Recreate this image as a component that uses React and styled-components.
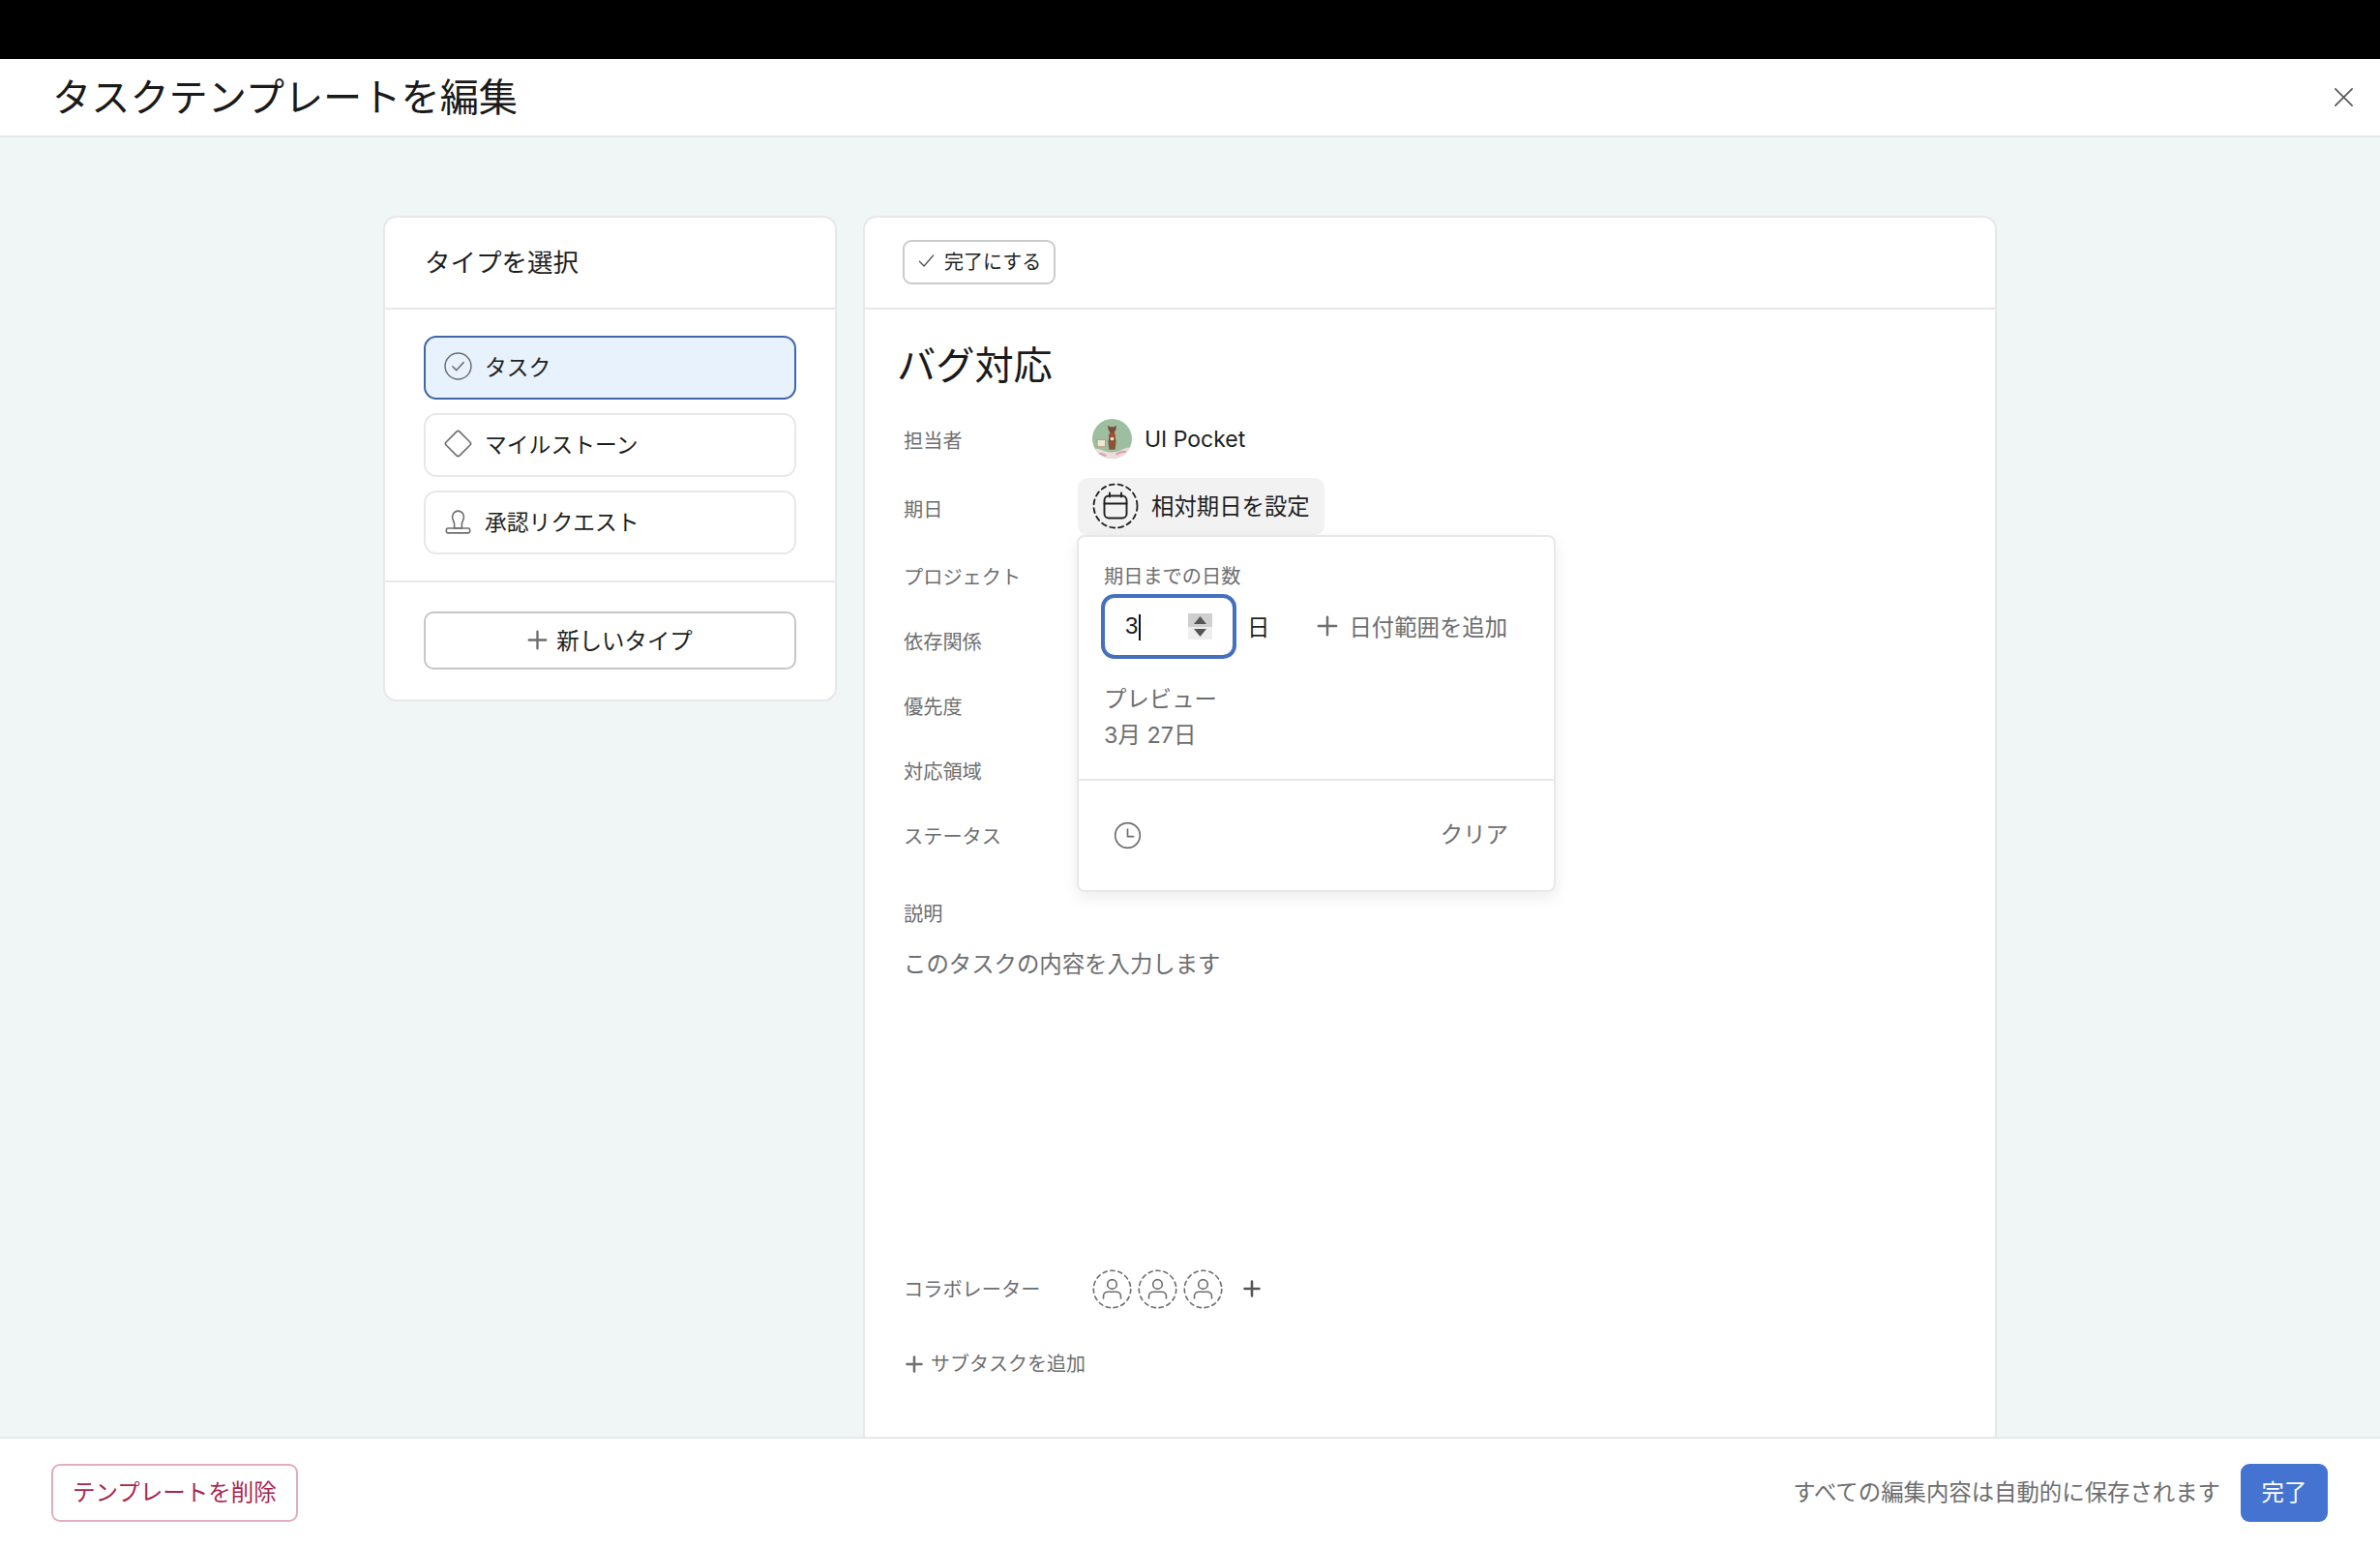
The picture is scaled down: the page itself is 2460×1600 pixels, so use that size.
import React from 'react';
import styled, { createGlobalStyle } from 'styled-components';

const GlobalStyle = createGlobalStyle`
  html, body {
    margin: 0;
    padding: 0;
    height: 100%;
    overflow: hidden;
    background: #fff;
    color: #1e1f21;
    font-family: "Inter", "Noto Sans CJK JP", sans-serif;
  }
  * { box-sizing: border-box; }
`;

const Page = styled.div`
  display: flex;
  flex-direction: column;
  height: 1600px;
`;

const BlackBar = styled.div`
  height: 61px;
  flex: none;
  background: #000;
`;

const Header = styled.header`
  display: flex;
  align-items: center;
  justify-content: space-between;
  height: 81px;
  flex: none;
  padding: 0 26px 0 54px;
  background: #fff;
  border-bottom: 2px solid #e6e8ea;
`;

const PageTitle = styled.h1`
  margin: 0;
  font-size: 40.2px;
  font-weight: 400;
  line-height: 50px;
  color: #1a1a1a;
`;

const Main = styled.main`
  flex: 1;
  min-height: 0;
  display: flex;
  align-items: stretch;
  gap: 27px;
  padding: 81px 0 0 396px;
  background: #f0f5f5;
  overflow: hidden;
`;

const Card = styled.section`
  background: #fff;
  border: 2px solid #e6e8ea;
  border-radius: 14px;
`;

const TypeCard = styled(Card)`
  width: 469px;
  height: 502px;
  flex: none;
`;

const CardHead = styled.div`
  display: flex;
  align-items: center;
  height: 95px;
  padding: 0 41px 4px;
  font-size: 26.5px;
  border-bottom: 2px solid #e6e8ea;
`;

const TypeList = styled.div`
  display: flex;
  flex-direction: column;
  gap: 14px;
  padding: 27px 40px;
  border-bottom: 2px solid #e6e8ea;
`;

const TypeItem = styled.div`
  display: flex;
  align-items: center;
  gap: 12px;
  height: 66px;
  padding: 0 17px 3px 18px;
  font-size: 22.8px;
  border-radius: 13px;
  border: 2px solid ${(p) => (p.$active ? '#3f66a8' : '#e6e8ea')};
  background: ${(p) => (p.$active ? '#e8f2fd' : '#fff')};
  svg { flex: none; color: #6d6e6f; }
`;

const NewTypeWrap = styled.div`
  padding: 30px 40px;
`;

const NewTypeButton = styled.button`
  display: flex;
  align-items: center;
  justify-content: center;
  gap: 9px;
  width: 100%;
  height: 60px;
  padding: 0 0 2px;
  font: inherit;
  font-size: 23.4px;
  color: #1e1f21;
  background: #fff;
  border: 2px solid #c4c6c8;
  border-radius: 10px;
  svg { color: #6d6e6f; }
`;

const EditCard = styled(Card)`
  width: 1172px;
  flex: none;
  height: 1300px;
`;

const EditHead = styled.div`
  display: flex;
  align-items: center;
  height: 95px;
  padding: 0 39px 2px;
  border-bottom: 2px solid #e6e8ea;
`;

const CompleteButton = styled.button`
  display: flex;
  align-items: center;
  gap: 9px;
  height: 46px;
  padding: 0 13px 2px;
  font: inherit;
  font-size: 20px;
  color: #1e1f21;
  background: #fff;
  border: 2px solid #c9cbcd;
  border-radius: 9px;
  svg { color: #555; }
`;

const EditBody = styled.div`
  padding: 33px 40px 0;
`;

const TaskTitle = styled.h2`
  margin: 0 0 18px -7px;
  font-size: 40.2px;
  font-weight: 400;
  line-height: 50px;
  color: #1a1a1a;
`;

const FieldRow = styled.div`
  position: relative;
  display: flex;
  align-items: center;
  height: ${(p) => p.$h || 67}px;
`;

const FieldLabel = styled.div`
  width: 195px;
  flex: none;
  font-size: 20.2px;
  line-height: 28px;
  color: #6d6e6f;
`;

const Avatar = styled.svg`
  width: 41px;
  height: 41px;
  border-radius: 50%;
  flex: none;
  margin-top: -6px;
`;

const AssigneeName = styled.span`
  margin: -5px 0 0 13px;
  font-size: 23px;
  line-height: 30px;
`;

const DueChip = styled.div`
  display: flex;
  align-items: center;
  gap: 13px;
  height: 59px;
  margin: -8px 0 0 -15px;
  padding: 0 15px;
  font-size: 23.4px;
  background: #f2f2f2;
  border-radius: 10px;
  span { margin-top: -3px; }
`;

const Popover = styled.div`
  position: absolute;
  z-index: 2;
  top: 62px;
  left: 179px;
  width: 495px;
  height: 369px;
  background: #fff;
  border: 2px solid #e6e8ea;
  border-radius: 8px;
  box-shadow: 0 6px 16px rgba(30, 31, 33, 0.08);
  display: flex;
  flex-direction: column;
`;

const PopoverTop = styled.div`
  height: 252px;
  flex: none;
  padding: 27px 26px 0 26px;
  border-bottom: 2px solid #e6e8ea;
`;

const PopoverLabel = styled.div`
  font-size: 20.2px;
  line-height: 28px;
  color: #6d6e6f;
`;

const DaysRow = styled.div`
  display: flex;
  align-items: center;
  margin: 4px 0 0 -3px;
`;

const DaysInput = styled.div`
  display: flex;
  align-items: center;
  justify-content: space-between;
  width: 140px;
  height: 67px;
  padding: 0 21px;
  font-family: "Liberation Sans", sans-serif;
  font-size: 24px;
  border: 4px solid #4470bd;
  border-radius: 14px;
`;

const Caret = styled.i`
  display: inline-block;
  width: 2px;
  height: 27px;
  margin-left: 1px;
  vertical-align: middle;
  background: #111;
`;

const Spinner = styled.div`
  display: flex;
  flex-direction: column;
  width: 25px;
  height: 27px;
`;

const SpinStep = styled.div`
  flex: 1;
  display: flex;
  align-items: center;
  justify-content: center;
  background: ${(p) => (p.$up ? '#cfcfcf' : '#eeeeee')};
  color: #555;
`;

const DayUnit = styled.span`
  margin: -2px 0 0 11px;
  font-size: 23.4px;
`;

const AddRange = styled.div`
  display: flex;
  align-items: center;
  gap: 11px;
  margin: -2px 0 0 49px;
  font-size: 23.4px;
  color: #6d6e6f;
`;

const Preview = styled.div`
  margin: 23px 0 0 0;
  font-size: 23.4px;
  line-height: 37px;
  color: #6d6e6f;
`;

const PopoverFoot = styled.div`
  display: flex;
  align-items: center;
  justify-content: space-between;
  height: 112px;
  padding: 0 47px 0 36px;
  font-size: 23.4px;
  color: #6d6e6f;
  span { margin-top: -4px; }
`;

const DescLabel = styled(FieldLabel)`
  margin-top: 33px;
`;

const DescText = styled.div`
  height: 331px;
  margin: 22px 0 0;
  font-size: 23.4px;
  line-height: 32px;
  color: #6d6e6f;
`;

const Collab = styled.div`
  display: flex;
  align-items: center;
  gap: 6px;
  margin-top: -2px;
`;

const AddPlus = styled.span`
  display: flex;
  margin-left: 15px;
  color: #555;
`;

const AddSubtask = styled.div`
  display: flex;
  align-items: center;
  gap: 8px;
  margin: 42px 0 0 2px;
  font-size: 20px;
  line-height: 28px;
  color: #6d6e6f;
`;

const Footer = styled.footer`
  position: relative;
  z-index: 3;
  display: flex;
  align-items: center;
  justify-content: space-between;
  flex: none;
  height: 115px;
  padding: 0 54px 2px 53px;
  background: #fff;
  border-top: 2px solid #e6e8ea;
`;

const DeleteButton = styled.button`
  height: 60px;
  padding: 0 20px 3px;
  font: inherit;
  font-size: 23.5px;
  color: #a8294f;
  background: #fff;
  border: 2px solid #e0aebd;
  border-radius: 9px;
`;

const FooterRight = styled.div`
  display: flex;
  align-items: center;
  gap: 21px;
`;

const SaveNote = styled.span`
  margin-top: -3px;
  font-size: 23.4px;
  color: #6d6e6f;
`;

const DoneButton = styled.button`
  width: 90px;
  height: 60px;
  padding: 0 0 4px;
  font: inherit;
  font-size: 23.4px;
  color: #fff;
  background: #4573d2;
  border: none;
  border-radius: 9px;
`;

const IconButton = styled.button`
  display: flex;
  padding: 0;
  background: none;
  border: none;
  color: #555;
`;

function Line({ size = 24, sw = 1.6, children }) {
  return (
    <svg width={size} height={size} viewBox="0 0 24 24" fill="none" stroke="currentColor" strokeWidth={sw} strokeLinecap="round" strokeLinejoin="round">
      {children}
    </svg>
  );
}

const PlusIcon = ({ size = 20, sw = 2.6 }) => (
  <Line size={size} sw={sw}><path d="M12 2v20M2 12h20" /></Line>
);

const CheckCircle = () => (
  <Line size={31} sw={1.15}>
    <circle cx="12" cy="12" r="10.4" />
    <path d="M7.6 12.2l3 3 5.8-6.2" />
  </Line>
);

const Diamond = () => (
  <Line size={31} sw={1.25}>
    <path d="M10.8 2.4a1.7 1.7 0 0 1 2.4 0l8.4 8.4a1.7 1.7 0 0 1 0 2.4l-8.4 8.4a1.7 1.7 0 0 1-2.4 0l-8.4-8.4a1.7 1.7 0 0 1 0-2.4z" />
  </Line>
);

const Stamp = () => (
  <Line size={31} sw={1.25}>
    <path d="M9 14.6c0-2-1.6-3.2-1.6-6a4.6 4.6 0 0 1 9.2 0c0 2.8-1.6 4-1.6 6v3.2H9z" />
    <rect x="2.6" y="17.8" width="18.8" height="3.8" rx="1.2" />
  </Line>
);

const DashedCircle = ({ size, color, dash, sw, children }) => (
  <svg width={size} height={size} viewBox="0 0 48 48" fill="none" stroke={color} strokeLinecap="round" strokeLinejoin="round">
    <circle cx="24" cy="24" r="22.5" strokeWidth={sw} strokeDasharray={dash} />
    {children}
  </svg>
);

function AvatarArt() {
  return (
    <Avatar viewBox="0 0 40 40">
      <rect width="40" height="40" fill="#9dbf9f" />
      <path d="M0 31c6-3 10 1 14 2s10 1 14-1 8-4 12-3v11H0z" fill="#ecdcdc" />
      <path d="M3 36c4-2 8 0 11 1M24 36c3-2 6-3 10-3" stroke="#d8a2a8" strokeWidth="2" fill="none" />
      <rect x="5" y="21" width="8" height="7" fill="#efe6d4" stroke="#b5846c" strokeWidth="0.6" />
      <path d="M15.5 6.5l2.5 1.5h4l2.5-1.5-.8 4.500-2 3.500h-3.400l-2-3.500z" fill="#7a4a36" />
      <path d="M17.5 14h5l1.500 9-1 8h-6l-1-8z" fill="#8a5238" />
      <rect x="16.500" y="16" width="7" height="1.800" fill="#c8394a" />
      <circle cx="20" cy="20" r="1.800" fill="#f1e5c8" />
    </Avatar>
  );
}

const Person = () => (
  <g strokeWidth="1.9">
    <circle cx="24" cy="18" r="5.6" />
    <path d="M13.5 35v-2.6c0-3.2 2.6-5.2 5.6-5.2h9.8c3 0 5.6 2 5.6 5.2V35" />
  </g>
);

export default function App() {
  return (
    <Page>
      <GlobalStyle />
      <BlackBar />
      <Header>
        <PageTitle>タスクテンプレートを編集</PageTitle>
        <IconButton aria-label="閉じる">
          <Line size={23} sw={1.7}><path d="M3 3l18 18M21 3L3 21" /></Line>
        </IconButton>
      </Header>
      <Main>
        <TypeCard>
          <CardHead>タイプを選択</CardHead>
          <TypeList>
            <TypeItem $active><CheckCircle />タスク</TypeItem>
            <TypeItem><Diamond />マイルストーン</TypeItem>
            <TypeItem><Stamp />承認リクエスト</TypeItem>
          </TypeList>
          <NewTypeWrap>
            <NewTypeButton><PlusIcon size={21} sw={2.7} />新しいタイプ</NewTypeButton>
          </NewTypeWrap>
        </TypeCard>
        <EditCard>
          <EditHead>
            <CompleteButton>
              <Line size={19} sw={1.7}><path d="M3 13l6 6L21 5" /></Line>
              完了にする
            </CompleteButton>
          </EditHead>
          <EditBody>
            <TaskTitle>バグ対応</TaskTitle>
            <FieldRow $h={70}>
              <FieldLabel>担当者</FieldLabel>
              <AvatarArt />
              <AssigneeName>UI Pocket</AssigneeName>
            </FieldRow>
            <FieldRow $h={72}>
              <FieldLabel>期日</FieldLabel>
              <DueChip>
                <DashedCircle size={48} color="#1e1f21" dash="5 4" sw="1.8">
                  <g strokeWidth="1.9">
                    <rect x="12.5" y="13.5" width="23" height="23" rx="4.5" />
                    <path d="M12.5 21.5h23M18 10.5v4M30 10.5v4" />
                  </g>
                </DashedCircle>
                <span>相対期日を設定</span>
              </DueChip>
              <Popover>
                <PopoverTop>
                  <PopoverLabel>期日までの日数</PopoverLabel>
                  <DaysRow>
                    <DaysInput>
                      <span>3<Caret /></span>
                      <Spinner>
                        <SpinStep $up>
                          <svg width="13" height="8" viewBox="0 0 13 8"><path d="M6.5 0L13 8H0z" fill="currentColor" /></svg>
                        </SpinStep>
                        <SpinStep>
                          <svg width="13" height="8" viewBox="0 0 13 8"><path d="M6.5 8L0 0h13z" fill="currentColor" /></svg>
                        </SpinStep>
                      </Spinner>
                    </DaysInput>
                    <DayUnit>日</DayUnit>
                    <AddRange><PlusIcon size={22} sw={2.7} />日付範囲を追加</AddRange>
                  </DaysRow>
                  <Preview>プレビュー<br />3月 27日</Preview>
                </PopoverTop>
                <PopoverFoot>
                  <Line size={29} sw={1.4}>
                    <circle cx="12" cy="12" r="10.6" />
                    <path d="M12 6.6V13h5" />
                  </Line>
                  <span>クリア</span>
                </PopoverFoot>
              </Popover>
            </FieldRow>
            <FieldRow><FieldLabel>プロジェクト</FieldLabel></FieldRow>
            <FieldRow><FieldLabel>依存関係</FieldLabel></FieldRow>
            <FieldRow><FieldLabel>優先度</FieldLabel></FieldRow>
            <FieldRow><FieldLabel>対応領域</FieldLabel></FieldRow>
            <FieldRow><FieldLabel>ステータス</FieldLabel></FieldRow>
            <DescLabel>説明</DescLabel>
            <DescText>このタスクの内容を入力します</DescText>
            <FieldRow $h={42}>
              <FieldLabel>コラボレーター</FieldLabel>
              <Collab>
                {[0, 1, 2].map((i) => (
                  <DashedCircle key={i} size={41} color="#6d6e6f" dash="5 4.4" sw="1.9"><Person /></DashedCircle>
                ))}
                <AddPlus><PlusIcon size={18} sw={3.4} /></AddPlus>
              </Collab>
            </FieldRow>
            <AddSubtask><PlusIcon size={18} sw={3.4} />サブタスクを追加</AddSubtask>
          </EditBody>
        </EditCard>
      </Main>
      <Footer>
        <DeleteButton>テンプレートを削除</DeleteButton>
        <FooterRight>
          <SaveNote>すべての編集内容は自動的に保存されます</SaveNote>
          <DoneButton>完了</DoneButton>
        </FooterRight>
      </Footer>
    </Page>
  );
}
